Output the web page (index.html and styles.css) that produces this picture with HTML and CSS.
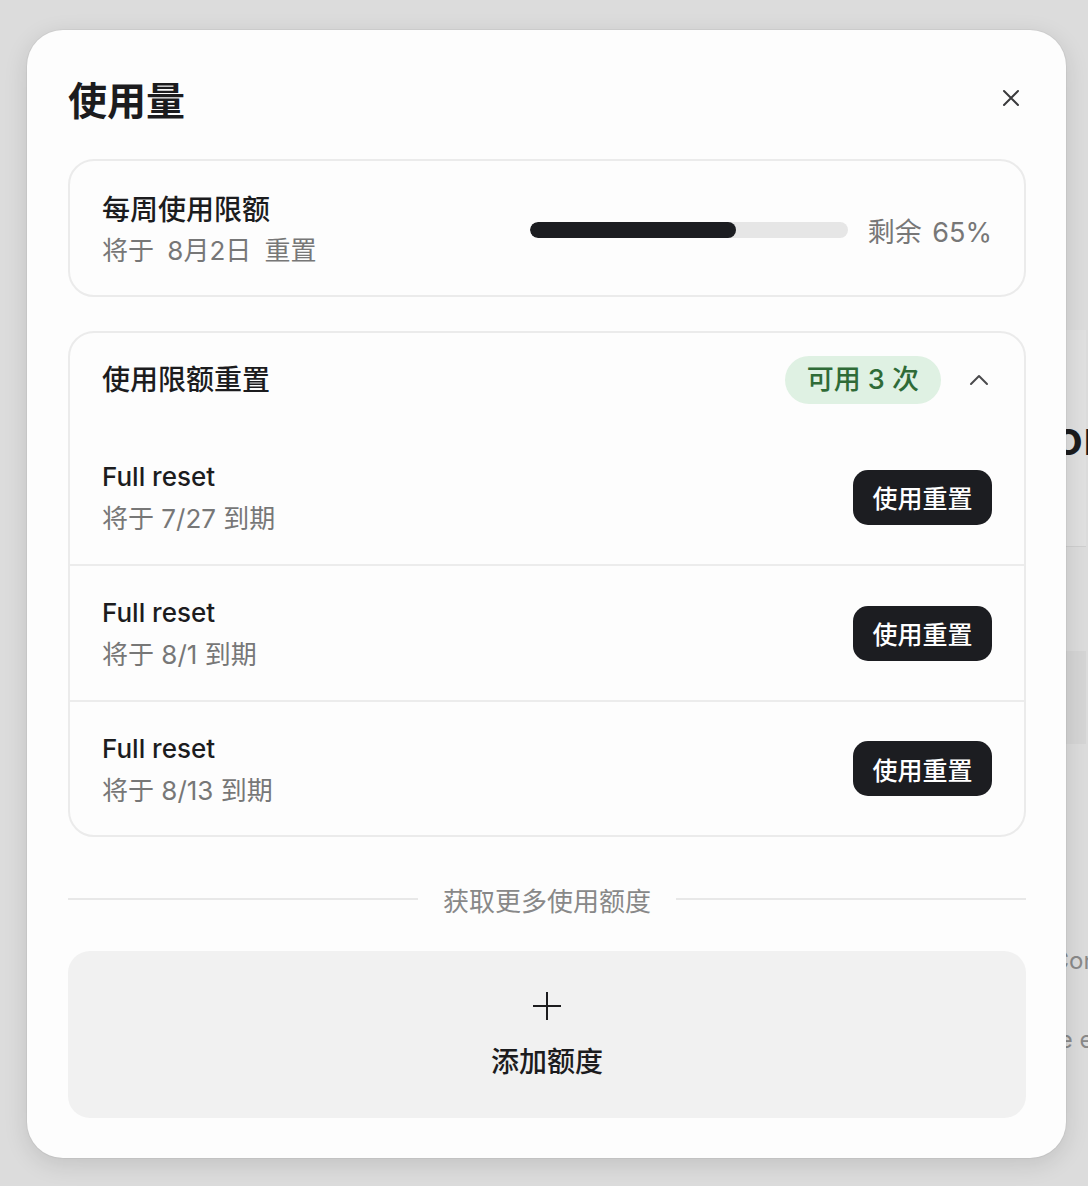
FILE: index.html
```html
<!DOCTYPE html>
<html lang="zh-CN">
<head>
    <meta charset="UTF-8">
    <meta name="viewport" content="width=device-width, initial-scale=1.0">
    <title>使用量</title>
    <link rel="stylesheet" href="styles.css">
</head>
<body>

    <!-- Página de fundo (escurecida atrás do modal) -->
    <div class="page">
        <div class="page-main">
            <div class="page-head">
                <h2 class="page-title">Editor</h2>
            </div>
            <div class="page-section"></div>
            <div class="page-band"></div>
            <div class="page-section">
                <p class="page-text page-text-1">Configuration</p>
                <p class="page-text page-text-2">Use ex</p>
            </div>
        </div>
    </div>

    <!-- Modal de uso -->
    <div class="modal">
        <div class="modal-header">
            <h1 class="modal-title">使用量</h1>
            <button class="close-btn" aria-label="关闭">
                <svg width="18" height="18" viewBox="0 0 18 18" fill="none" stroke="#3a3a3c" stroke-width="2" stroke-linecap="round">
                    <path d="M2 2 L16 16 M16 2 L2 16"/>
                </svg>
            </button>
        </div>

        <div class="card weekly">
            <div class="weekly-text">
                <div class="item-title">每周使用限额</div>
                <div class="item-sub weekly-sub">将于 8月2日 重置</div>
            </div>
            <div class="weekly-meter">
                <div class="bar">
                    <div class="bar-fill" style="width: 65%"></div>
                </div>
                <span class="meter-label">剩余 65%</span>
            </div>
        </div>

        <div class="card resets">
            <div class="resets-header">
                <div class="item-title">使用限额重置</div>
                <div class="resets-right">
                    <span class="badge">可用 3 次</span>
                    <svg class="chevron" width="22" height="14" viewBox="0 0 22 14" fill="none" stroke="#4a4a4c" stroke-width="2" stroke-linecap="round" stroke-linejoin="round">
                        <path d="M3 11 L11 3 L19 11"/>
                    </svg>
                </div>
            </div>

            <div class="reset-row">
                <div>
                    <div class="row-title">Full reset</div>
                    <div class="item-sub">将于 7/27 到期</div>
                </div>
                <button class="use-btn">使用重置</button>
            </div>
            <div class="reset-row">
                <div>
                    <div class="row-title">Full reset</div>
                    <div class="item-sub">将于 8/1 到期</div>
                </div>
                <button class="use-btn">使用重置</button>
            </div>
            <div class="reset-row">
                <div>
                    <div class="row-title">Full reset</div>
                    <div class="item-sub">将于 8/13 到期</div>
                </div>
                <button class="use-btn">使用重置</button>
            </div>
        </div>

        <div class="divider">
            <span class="divider-line"></span>
            <span class="divider-text">获取更多使用额度</span>
            <span class="divider-line"></span>
        </div>

        <button class="add-card">
            <svg width="30" height="30" viewBox="0 0 30 30" fill="none" stroke="#1c1c1e" stroke-width="2">
                <path d="M15 1 V29 M1 15 H29"/>
            </svg>
            <span class="add-text">添加额度</span>
        </button>
    </div>

</body>
</html>
```

FILE: styles.css
```css
body {
    font-family: Inter, "Noto Sans CJK SC", sans-serif;
    margin: 0;
    background-color: #dcdcdc;
    color: #1c1c1e;
    overflow: hidden;
    height: 1186px;
}

/* fundo */
.page {
    display: flex;
    height: 100%;
}
.page-main {
    margin-left: 860px;
    width: 226px;
    flex-shrink: 0;
    padding-top: 330px;
    text-align: right;
    white-space: nowrap;
}
.page-head {
    height: 217px;
    background-color: #e0e0e0;
    border-bottom: 1px solid #cfcfcf;
    box-sizing: border-box;
    padding-top: 80px;
}
.page-title {
    margin: 0 -16px 0 0;
    font-size: 48px;
    font-weight: 600;
    color: #1c1c1e;
    line-height: 56px;
}
.page-section {
    height: 104px;
}
.page-band {
    height: 93px;
    background-color: #d5d5d5;
}
.page-text {
    margin: 0;
    font-size: 24px;
    color: #8a8a8a;
}
.page-text-1 {
    padding-top: 202px;
    margin-right: -120px;
}
.page-text-2 {
    padding-top: 50px;
    margin-right: -20px;
}

/* modal */
.modal {
    position: absolute;
    left: 27px;
    top: 30px;
    width: 1039px;
    box-sizing: border-box;
    padding: 40px 40px 40px 41px;
    background-color: #fdfdfd;
    border-radius: 36px;
    box-shadow: 0 6px 24px rgba(0, 0, 0, 0.12), 0 0 0 1px rgba(0, 0, 0, 0.04);
}
.modal-header {
    display: flex;
    align-items: center;
    justify-content: space-between;
    height: 56px;
    margin-bottom: 33px;
}
.modal-title {
    margin: 0;
    font-size: 39px;
    font-weight: 600;
}
.close-btn {
    border: none;
    background: none;
    padding: 0;
    width: 18px;
    height: 18px;
    margin-right: 6px;
    cursor: pointer;
}

.card {
    border: 2px solid #ebebeb;
    border-radius: 26px;
    background-color: #fdfdfd;
}
.item-title {
    font-size: 28px;
    font-weight: 500;
    line-height: 40px;
}
.row-title {
    font-size: 26px;
    font-weight: 500;
    line-height: 43px;
}
.item-sub {
    font-size: 26px;
    color: #777;
    line-height: 41px;
}
.weekly-sub {
    word-spacing: 6px;
}

.weekly {
    height: 138px;
    box-sizing: border-box;
    padding: 4px 32px 0;
    display: flex;
    align-items: center;
    justify-content: space-between;
    margin-bottom: 34px;
}
.weekly-meter {
    display: flex;
    align-items: center;
    gap: 20px;
}
.bar {
    width: 318px;
    height: 16px;
    border-radius: 8px;
    background-color: #e6e6e6;
    overflow: hidden;
}
.bar-fill {
    height: 100%;
    border-radius: 8px;
    background-color: #1c1d21;
}
.meter-label {
    font-size: 27px;
    word-spacing: 3px;
    color: #777;
}

.resets-header {
    height: 97px;
    box-sizing: border-box;
    padding: 0 32px 4px;
    display: flex;
    align-items: center;
    justify-content: space-between;
}
.resets-right {
    display: flex;
    align-items: center;
    gap: 27px;
}
.badge {
    background-color: #dff1e3;
    color: #2f6b37;
    font-size: 27px;
    font-weight: 500;
    height: 48px;
    line-height: 48px;
    padding: 0 22px;
    border-radius: 24px;
}
.chevron {
    margin-right: 2px;
}
.reset-row {
    height: 134px;
    padding: 0 32px;
    display: flex;
    align-items: center;
    justify-content: space-between;
    border-bottom: 2px solid #ececec;
}
.reset-row:last-child {
    height: 133px;
    border-bottom: none;
}
.use-btn {
    font-family: inherit;
    font-size: 25px;
    font-weight: 500;
    color: white;
    background-color: #1c1d21;
    border: none;
    border-radius: 15px;
    width: 139px;
    height: 55px;
    padding: 0;
    cursor: pointer;
}

.divider {
    display: flex;
    align-items: center;
    gap: 25px;
    height: 40px;
    margin: 42px 0 32px;
}
.divider-line {
    flex: 1;
    height: 2px;
    background-color: #e8e8e8;
}
.divider-text {
    font-size: 26px;
    color: #888;
}

.add-card {
    width: 100%;
    height: 167px;
    border: none;
    border-radius: 22px;
    background-color: #f1f1f1;
    display: flex;
    flex-direction: column;
    align-items: center;
    padding: 40px 0 0;
    gap: 21px;
    font-family: inherit;
    color: #1c1c1e;
    cursor: pointer;
}
.add-text {
    font-size: 28px;
    font-weight: 500;
    line-height: 40px;
}
```
